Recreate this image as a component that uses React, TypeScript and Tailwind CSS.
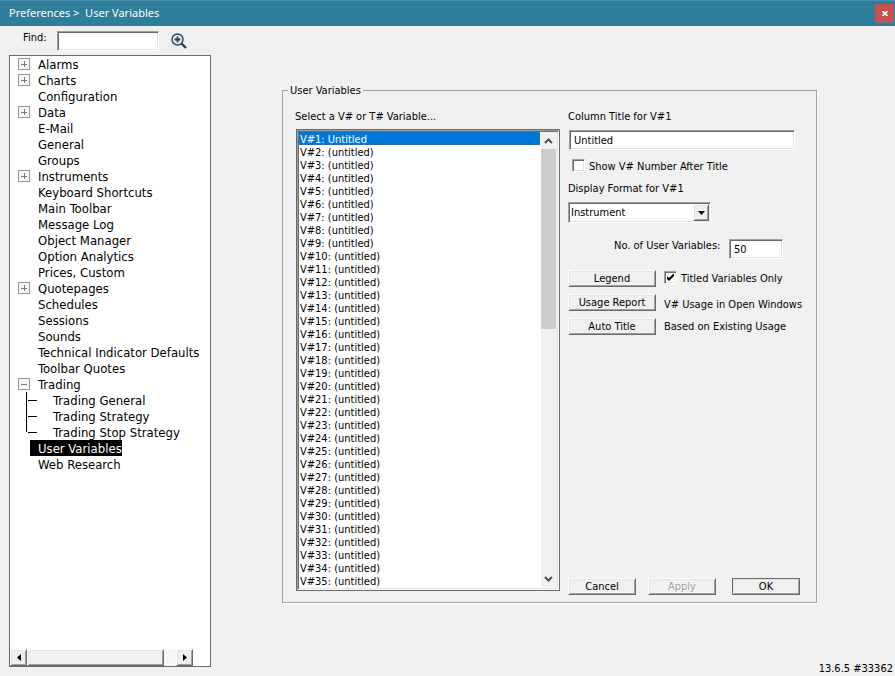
import { useState } from "react";
import clsx from "clsx";

interface ITreeItem {
  name: string;
  state?: "open" | "closed";
  children?: string[];
}

const treeItems: ITreeItem[] = [
  { name: "Alarms", state: "closed" },
  { name: "Charts", state: "closed" },
  { name: "Configuration" },
  { name: "Data", state: "closed" },
  { name: "E-Mail" },
  { name: "General" },
  { name: "Groups" },
  { name: "Instruments", state: "closed" },
  { name: "Keyboard Shortcuts" },
  { name: "Main Toolbar" },
  { name: "Message Log" },
  { name: "Object Manager" },
  { name: "Option Analytics" },
  { name: "Prices, Custom" },
  { name: "Quotepages", state: "closed" },
  { name: "Schedules" },
  { name: "Sessions" },
  { name: "Sounds" },
  { name: "Technical Indicator Defaults" },
  { name: "Toolbar Quotes" },
  {
    name: "Trading",
    state: "open",
    children: ["Trading General", "Trading Strategy", "Trading Stop Strategy"],
  },
  { name: "User Variables" },
  { name: "Web Research" },
];

const variables = Array.from({ length: 35 }, (_, i) =>
  i === 0 ? "V#1: Untitled" : `V#${i + 1}: (untitled)`
);

const sunken =
  "border border-t-[#a0a0a0] border-l-[#a0a0a0] border-r-white border-b-white bg-white shadow-[inset_1px_1px_0_#696969,inset_-1px_-1px_0_#e3e3e3] outline-none";
const raised =
  "border border-t-white border-l-white border-r-[#696969] border-b-[#696969] bg-[#f0f0f0] shadow-[inset_1px_1px_0_#e3e3e3,inset_-1px_-1px_0_#a0a0a0]";

const Expander = ({ open }: { open: boolean }) => (
  <svg width="12" height="12" viewBox="0 0 12 12" shapeRendering="crispEdges">
    <rect x="0.5" y="0.5" width="11" height="11" fill="#f4f4f4" stroke="#999" />
    <path d="M3 6H9" stroke="#777" />
    {!open && <path d="M6 3V9" stroke="#777" />}
  </svg>
);

const Branch = ({ last }: { last: boolean }) => (
  <svg
    width="11"
    height="16"
    viewBox="0 0 11 16"
    stroke="#000"
    shapeRendering="crispEdges"
  >
    <path d={last ? "M0.5 0V8" : "M0.5 0V16"} />
    <path d="M2 8.5H11" />
  </svg>
);

const TreeLabel = ({
  name,
  active,
  onClick,
}: {
  name: string;
  active: boolean;
  onClick: () => void;
}) => (
  <button
    type="button"
    onClick={onClick}
    className={clsx(
      "h-4 pt-0.5 pl-2 whitespace-nowrap leading-[14px]",
      active && "bg-black text-white"
    )}
  >
    {name}
  </button>
);

const PushButton = ({
  children,
  className,
  disabled,
}: {
  children: string;
  className?: string;
  disabled?: boolean;
}) => (
  <button
    type="button"
    disabled={disabled}
    className={clsx(
      "flex h-[17px] items-center justify-center leading-3",
      raised,
      disabled && "text-[#a0a0a0] [text-shadow:1px_1px_0_#fff]",
      className
    )}
  >
    {children}
  </button>
);

const CheckBox = ({
  label,
  checked,
  className,
}: {
  label: string;
  checked?: boolean;
  className?: string;
}) => (
  <label className={clsx("flex items-start gap-1", className)}>
    <span className="relative flex">
      <input
        type="checkbox"
        defaultChecked={checked}
        className={clsx("peer h-[13px] w-[13px] appearance-none", sunken)}
      />
      <svg
        width="7"
        height="7"
        viewBox="0 0 7 7"
        className="pointer-events-none absolute top-[3px] left-[3px] hidden peer-checked:block"
      >
        <path d="M0 2L2 4L7 -1V2L2 7L0 5Z" />
      </svg>
    </span>
    <span className="pt-px">{label}</span>
  </label>
);

const Sidebar = () => {
  const [active, setActive] = useState("User Variables");
  const [find, setFind] = useState("");

  return (
    <aside className="mb-[9px] flex w-[202px] shrink-0 flex-col">
      <div className="flex h-[29px] items-start pt-1 pl-[14px]">
        <label htmlFor="find" className="w-[34px] pt-px">
          Find:
        </label>
        <input
          id="find"
          value={find}
          onChange={(e) => setFind(e.target.value)}
          className={clsx("mt-px h-5 w-[102px] px-1", sunken)}
        />
        <button type="button" aria-label="Search" className="mt-[3px] ml-3">
          <svg
            width="16"
            height="16"
            viewBox="0 0 16 16"
            fill="none"
            stroke="#24405f"
          >
            <circle cx="6.5" cy="6.5" r="5.5" strokeWidth="1.4" />
            <path d="M3.5 6.5H9.5M6.5 3.5V9.5" strokeWidth="1.8" />
            <path d="M10.5 10.5L15 15" strokeWidth="2.4" />
          </svg>
        </button>
      </div>

      <div className="flex flex-1 flex-col justify-between border border-[#696969] bg-white">
        <ul className="text-[13px]">
          {treeItems.map((item) => (
            <li key={item.name}>
              <div className="flex h-4 items-center pl-2">
                <span className="w-3">
                  {item.state && <Expander open={item.state === "open"} />}
                </span>
                <TreeLabel
                  name={item.name}
                  active={active === item.name}
                  onClick={() => setActive(item.name)}
                />
              </div>
              {item.children && (
                <ul className="pl-4">
                  {item.children.map((child, i) => (
                    <li key={child} className="flex h-4 items-center gap-2">
                      <Branch last={i === item.children!.length - 1} />
                      <TreeLabel
                        name={child}
                        active={active === child}
                        onClick={() => setActive(child)}
                      />
                    </li>
                  ))}
                </ul>
              )}
            </li>
          ))}
        </ul>

        {/* Horizontal scrollbar */}
        <div className="mr-[17px] flex h-[17px] bg-[#f7f7f7]">
          <button
            type="button"
            aria-label="Scroll left"
            className={clsx("flex w-[17px] items-center justify-center", raised)}
          >
            <svg width="4" height="7" viewBox="0 0 4 7">
              <path d="M4 0V7L0 3.5Z" />
            </svg>
          </button>
          <div className={clsx("w-[137px]", raised)} />
          <div className="flex-1" />
          <button
            type="button"
            aria-label="Scroll right"
            className={clsx("flex w-[17px] items-center justify-center", raised)}
          >
            <svg width="4" height="7" viewBox="0 0 4 7">
              <path d="M0 0V7L4 3.5Z" />
            </svg>
          </button>
        </div>
      </div>
    </aside>
  );
};

const VariableList = () => {
  const [selected, setSelected] = useState(0);

  return (
    <div className="border border-[#696969]">
      <div className={clsx("flex px-px pt-px pb-0.5", sunken)}>
        <ul role="listbox" aria-label="Variables" className="flex-1">
          {variables.map((name, i) => (
            <li
              key={name}
              role="option"
              aria-selected={selected === i}
              onClick={() => setSelected(i)}
              className={clsx(
                "h-[13px] pt-0.5 pl-px leading-[11px]",
                selected === i && "bg-[#0078d7] text-white"
              )}
            >
              {name}
            </li>
          ))}
        </ul>
        <div className="ml-px flex w-4 flex-col items-center bg-[#f0f0f0] pr-px">
          <svg
            width="9"
            height="17"
            viewBox="0 0 9 17"
            fill="none"
            stroke="#505050"
            strokeWidth="2"
          >
            <path d="M1 11L4.5 7.5L8 11" />
          </svg>
          <div className="h-[180px] w-full bg-[#cdcdcd]" />
          <svg
            width="9"
            height="17"
            viewBox="0 0 9 17"
            fill="none"
            stroke="#505050"
            strokeWidth="2"
            className="mt-auto"
          >
            <path d="M1 7L4.5 10.5L8 7" />
          </svg>
        </div>
      </div>
    </div>
  );
};

const VariableForm = () => (
  <div className="flex flex-1 flex-col">
    <label htmlFor="title">Column Title for V#1</label>
    <input
      id="title"
      defaultValue="Untitled"
      className={clsx("mt-1.5 ml-px h-5 w-[226px] px-1", sunken)}
    />
    <CheckBox label="Show V# Number After Title" className="mt-[9px] ml-1" />
    <label htmlFor="format" className="mt-2">
      Display Format for V#1
    </label>
    <div className="relative mt-1.5 w-[143px]">
      <select
        id="format"
        className={clsx("h-[21px] w-full appearance-none pl-0.5", sunken)}
      >
        <option>Instrument</option>
      </select>
      <span
        className={clsx(
          "pointer-events-none absolute top-0.5 right-0.5 flex h-[17px] w-4 items-center justify-center",
          raised
        )}
      >
        <svg width="7" height="4" viewBox="0 0 7 4">
          <path d="M0 0H7L3.5 4Z" />
        </svg>
      </span>
    </div>
    <div className="mt-4 ml-[46px] flex items-start gap-2">
      <label htmlFor="count" className="w-[107px] whitespace-nowrap">
        No. of User Variables:
      </label>
      <input
        id="count"
        defaultValue="50"
        className={clsx("h-5 w-[54px] px-1", sunken)}
      />
    </div>

    <div className="mt-[11px] grid grid-cols-[88px_1fr] items-center gap-x-2 gap-y-[7px]">
      <PushButton>Legend</PushButton>
      <CheckBox label="Titled Variables Only" checked />
      <PushButton>Usage Report</PushButton>
      <span className="pt-1 leading-[13px] whitespace-nowrap">
        V# Usage in Open Windows
      </span>
      <PushButton>Auto Title</PushButton>
      <span className="leading-[13px]">Based on Existing Usage</span>
    </div>

    <div className="mt-auto -mb-1 flex">
      <PushButton className="w-[68px]">Cancel</PushButton>
      <PushButton className="ml-3 w-[68px]" disabled>
        Apply
      </PushButton>
      <PushButton className="ml-4 w-[68px] outline -outline-offset-1 outline-[#696969]">
        OK
      </PushButton>
    </div>
  </div>
);

const App: React.FC = () => {
  return (
    <div className="flex min-h-screen flex-col bg-[#f0f0f0] font-['DejaVu_Sans_Condensed','DejaVu_Sans',sans-serif] text-[11px] leading-[14px] text-black">
      <header className="flex h-[26px] items-center justify-between border-t border-[#4a8ea8] bg-[#2e7d9a] pr-px pl-[9px]">
        <h1 className="pb-0.5 font-['Noto_Sans',sans-serif] text-[11px] text-white">
          Preferences &gt;&nbsp; User Variables
        </h1>
        <button
          type="button"
          aria-label="Close"
          className="flex h-[19px] w-[19px] items-center justify-center bg-[#c75050]"
        >
          <svg
            width="6"
            height="5"
            viewBox="0 0 6 5"
            stroke="#fff"
            strokeWidth="1.7"
          >
            <path d="M0.5 0L5.5 5M5.5 0L0.5 5" />
          </svg>
        </button>
      </header>

      <main className="flex flex-1 pl-[9px]">
        <Sidebar />
        <section className="flex flex-1 flex-col justify-between">
          <fieldset className="mt-[57px] mr-[78px] ml-[71px] border border-[#a0a0a0] px-3 pb-[11px] shadow-[1px_1px_0_#fff]">
            <legend className="-ml-[7px] px-0.5 pt-px leading-[13px]">
              User Variables
            </legend>
            <p className="pt-[13px]">Select a V# or T# Variable...</p>
            <div className="mt-[5px] grid grid-cols-[minmax(0,264px)_1fr] gap-x-2 pl-px">
              <VariableList />
              <div className="-mt-[19px] flex flex-col">
                <VariableForm />
              </div>
            </div>
          </fieldset>
          <footer className="self-end pr-0.5">13.6.5 #33362</footer>
        </section>
      </main>
    </div>
  );
};

export default App;
